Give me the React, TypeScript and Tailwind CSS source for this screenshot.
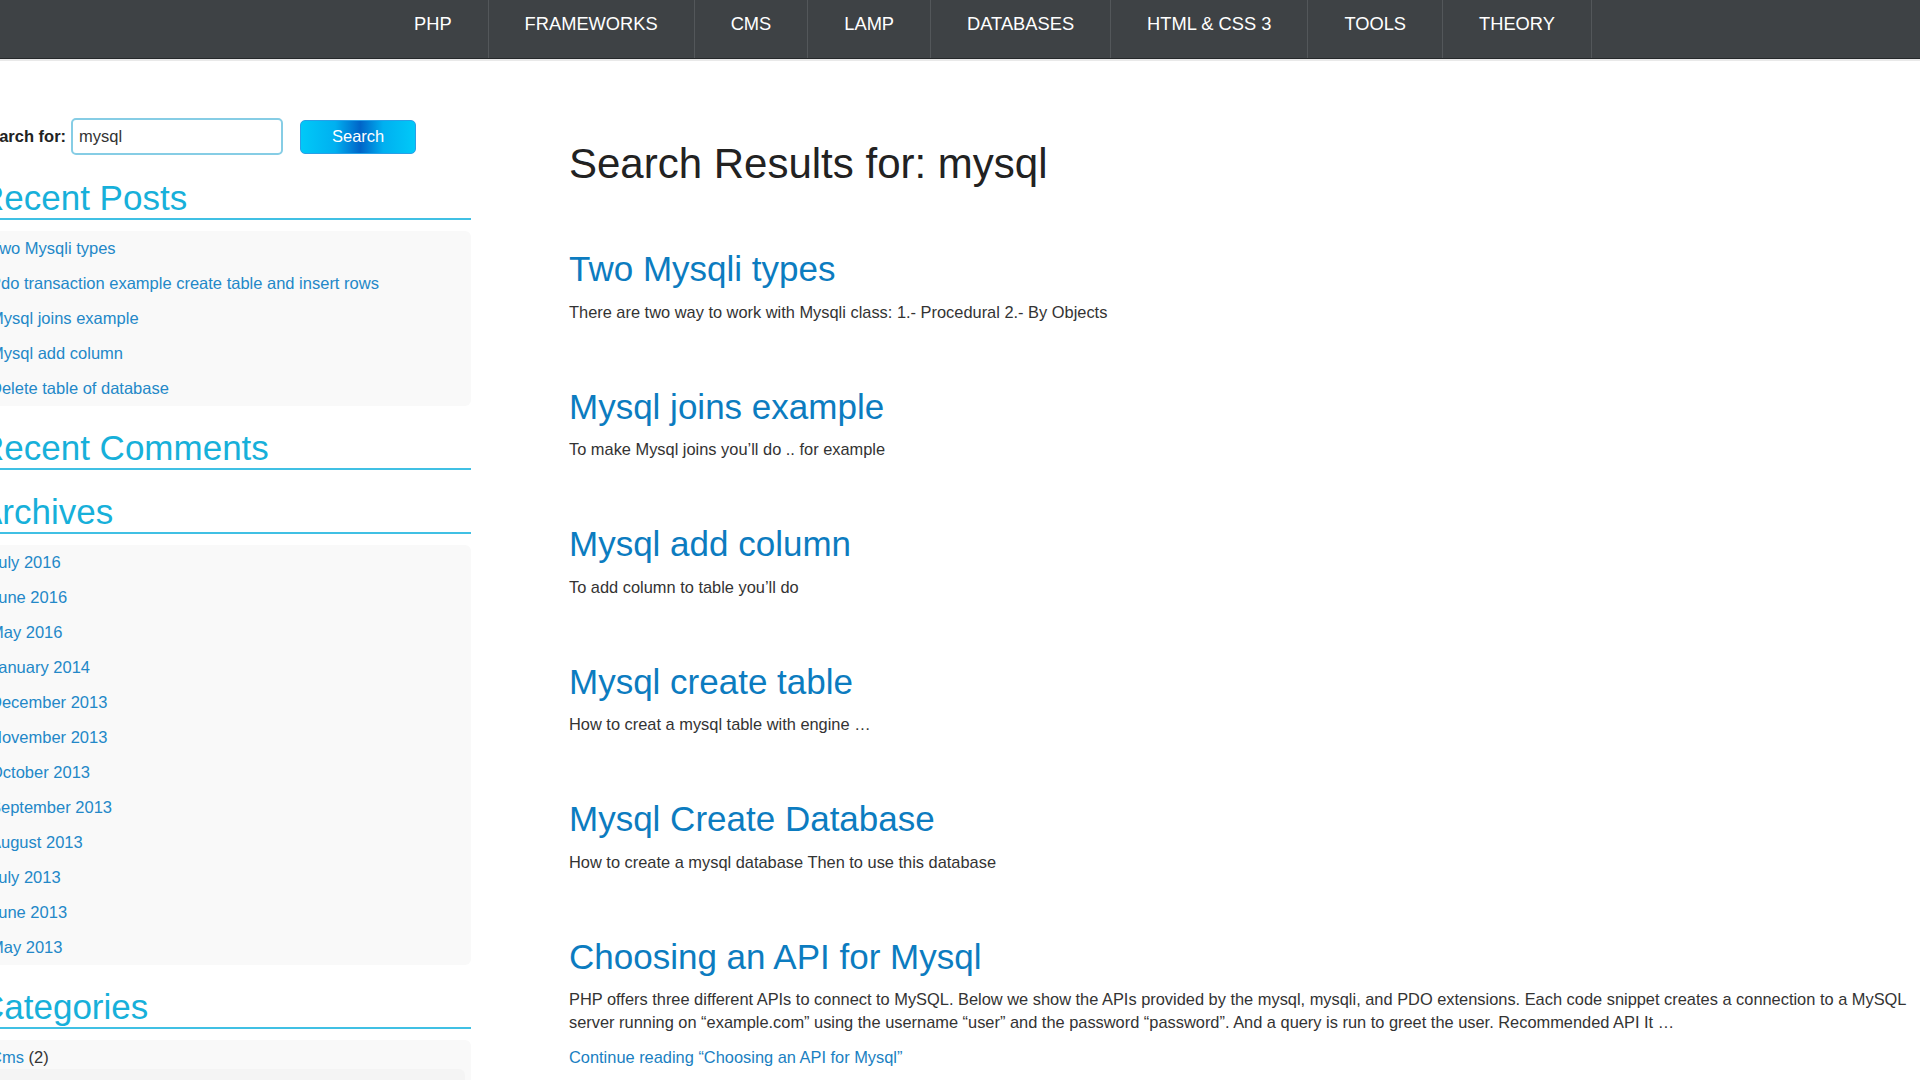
import React from "react";

const navItems = ["PHP", "FRAMEWORKS", "CMS", "LAMP", "DATABASES", "HTML & CSS 3", "TOOLS", "THEORY"];

const recentPosts = [
  "Two Mysqli types",
  "Pdo transaction example create table and insert rows",
  "Mysql joins example",
  "Mysql add column",
  "Delete table of database",
];

const archives = [
  "July 2016",
  "June 2016",
  "May 2016",
  "January 2014",
  "December 2013",
  "November 2013",
  "October 2013",
  "September 2013",
  "August 2013",
  "July 2013",
  "June 2013",
  "May 2013",
];

const results = [
  {
    title: "Two Mysqli types",
    text: "There are two way to work with Mysqli class: 1.- Procedural 2.- By Objects",
  },
  { title: "Mysql joins example", text: "To make Mysql joins you’ll do .. for example" },
  { title: "Mysql add column", text: "To add column to table you’ll do" },
  { title: "Mysql create table", text: "How to creat a mysql table with engine …" },
  { title: "Mysql Create Database", text: "How to create a mysql database Then to use this database" },
];

const WidgetTitle = ({ children }: { children: React.ReactNode }) => (
  <h2 className="text-[35px] leading-[40px] text-[#17b0da] border-b-2 border-[#40c0e4]">{children}</h2>
);

const App = () => {
  return (
    <div className="w-[1920px] h-[1080px] overflow-hidden bg-white font-['Liberation_Sans',Arial,sans-serif]">
      {/* Top navigation */}
      <nav className="h-[59px] bg-[#3e4245] border-b border-[#25282a]">
        <ul className="flex h-full pl-[378px]">
          {navItems.map((item) => (
            <li
              key={item}
              className="h-full border-r border-[#53575a] px-[36px] pt-[13px] text-[18.3px] leading-[21px] text-white"
            >
              {item}
            </li>
          ))}
        </ul>
      </nav>
      <div className="h-[2px] bg-[#e9e9e9]" />

      <div className="flex">
        {/* Sidebar */}
        <aside className="w-[492px] shrink-0 -ml-[21px] pt-[57px]">
          <form className="flex items-center h-[37px]">
            <label className="text-[16.5px] font-bold text-[#222]">Search for:</label>
            <div className="ml-[5px] w-[212px] h-[37px] border-2 border-[#86cde5] rounded-[5px] flex items-center px-[6px] text-[16.5px] text-[#333]">
              mysql
            </div>
            <button
              type="button"
              className="ml-[17px] w-[116px] h-[34px] rounded-[5px] border border-[#2a9fe6] text-white text-[16.5px] bg-[linear-gradient(90deg,#00c9f8_0%,#00b0f0_30%,#0064c8_52%,#00b0f0_72%,#00c9f8_100%)]"
            >
              Search
            </button>
          </form>

          <section className="mt-[23px] mb-[22px]">
            <WidgetTitle>Recent Posts</WidgetTitle>
            <ul className="mt-[11px] bg-[#f9f9f9] rounded-[6px]">
              {recentPosts.map((p) => (
                <li key={p} className="pl-[11px] py-[8px] leading-[19px] text-[16.5px] text-[#2388c8]">
                  {p}
                </li>
              ))}
            </ul>
          </section>

          <section className="mb-[22px]">
            <WidgetTitle>Recent Comments</WidgetTitle>
          </section>

          <section className="mb-[22px]">
            <WidgetTitle>Archives</WidgetTitle>
            <ul className="mt-[11px] bg-[#f9f9f9] rounded-[6px]">
              {archives.map((a) => (
                <li key={a} className="pl-[11px] py-[8px] leading-[19px] text-[16.5px] text-[#2388c8]">
                  {a}
                </li>
              ))}
            </ul>
          </section>

          <section>
            <WidgetTitle>Categories</WidgetTitle>
            <ul className="mt-[11px] bg-[#f9f9f9] rounded-[6px]">
              <li className="pl-[11px] pt-[8px] leading-[19px] text-[16.5px] text-[#333]">
                <span className="text-[#2388c8]">Cms</span> (2)
                <ul className="mt-[2px] mr-[6px] bg-[#f4f4f4] rounded-[6px]">
                  <li className="pl-[11px] py-[8px] leading-[19px]">
                    <span className="text-[#2388c8]">Drupal</span> (1)
                  </li>
                </ul>
              </li>
              <li className="pl-[11px] py-[8px] leading-[19px] text-[16.5px] text-[#333]">
                <span className="text-[#2388c8]">Databases</span> (9)
              </li>
            </ul>
          </section>
        </aside>

        {/* Main content */}
        <main className="ml-[98px] w-[1350px] pt-[79px] text-[16.4px] text-[#333]">
          <h1 className="text-[42px] leading-[48px] text-[#222]">Search Results for: mysql</h1>

          <div className="mt-[61px] flex flex-col gap-[63px]">
            {results.map((r) => (
              <article key={r.title}>
                <h2 className="text-[35px] leading-[40px] text-[#0c7cc0]">{r.title}</h2>
                <p className="mt-[11.5px] leading-[23px]">{r.text}</p>
              </article>
            ))}
            <article>
              <h2 className="text-[35px] leading-[40px] text-[#0c7cc0]">Choosing an API for Mysql</h2>
              <p className="mt-[11.5px] leading-[23px]">
                PHP offers three different APIs to connect to MySQL. Below we show the APIs provided by the mysql,
                mysqli, and PDO extensions. Each code snippet creates a connection to a MySQL server running on
                “example.com” using the username “user” and the password “password”. And a query is run to greet the
                user. Recommended API It …
              </p>
              <p className="mt-[12px] leading-[23px] text-[#1a7fc2]">Continue reading “Choosing an API for Mysql”</p>
            </article>
          </div>
        </main>
      </div>
    </div>
  );
};

export default App;
